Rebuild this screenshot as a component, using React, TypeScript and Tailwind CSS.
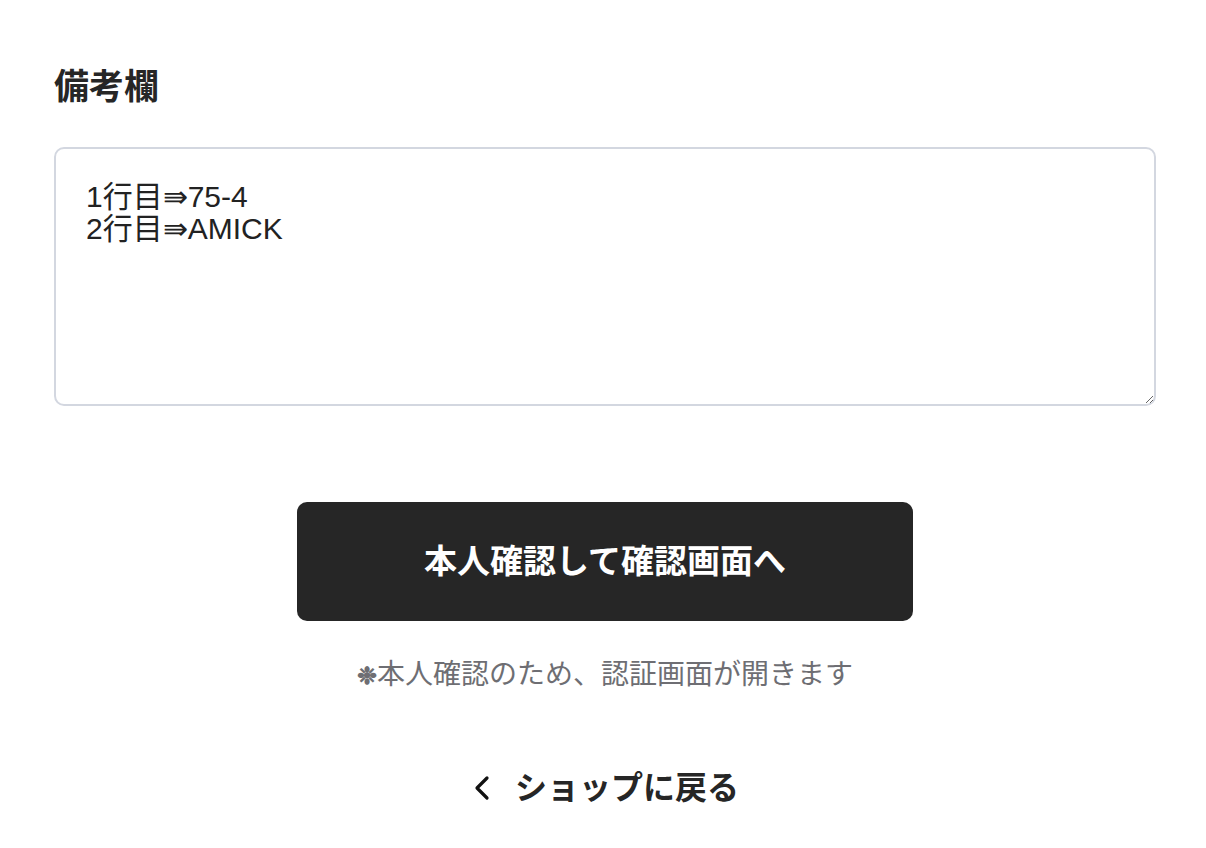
const jp = "font-['Liberation_Sans','Noto_Sans_CJK_JP',sans-serif]";

function ChevronLeft() {
  return (
    <svg width="22" height="26" viewBox="0 0 22 26" fill="none" aria-hidden="true">
      <path d="M16 3 L6 13 L16 23" stroke="#111" strokeWidth="3.2" strokeLinecap="round" strokeLinejoin="round" />
    </svg>
  );
}

export default function App() {
  return (
    <div className={`${jp} min-h-[848px] bg-white pl-[54px] pr-[50px] pt-[64px] text-[#262626]`}>
      <h2 className="text-[35px] font-bold leading-[46px]">備考欄</h2>

      <textarea
        className="mt-[37px] block h-[259px] w-full resize-y rounded-[10px] border-2 border-[#d3d7e0] px-[30px] pt-[32px] text-[30px] leading-[32px] text-[#222] outline-none"
        defaultValue={"1行目⇛75-4\n2行目⇛AMICK"}
      />

      <div className="mt-[96px] flex flex-col items-center">
        <button
          type="button"
          className="flex h-[119px] w-[616px] items-center justify-center rounded-[10px] bg-[#262626] text-[33px] font-bold text-white"
        >
          本人確認して確認画面へ
        </button>
        <p className="mt-[36px] text-[28px] leading-[36px] text-[#6e6e73]">
          <span className="text-[24px] font-bold">❉</span>本人確認のため、認証画面が開きます
        </p>
        <a href="#" className="mt-[70px] flex items-center gap-[22px] text-[32px] font-bold text-[#262626]">
          <ChevronLeft />
          ショップに戻る
        </a>
      </div>
    </div>
  );
}
